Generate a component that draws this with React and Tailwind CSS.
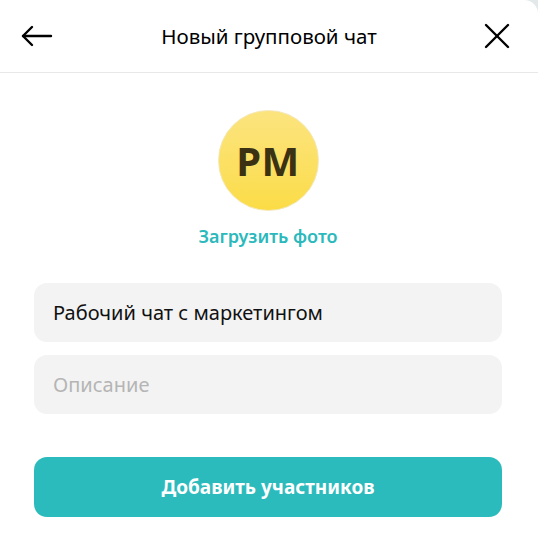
import React, { useState } from 'react';

const App = () => {
  const [name, setName] = useState('Рабочий чат с маркетингом');
  const [description, setDescription] = useState('');

  return (
    <div className="w-[538px] h-[546px] bg-[#e3e8ea]" style={{ fontFamily: '"Noto Sans", "Open Sans", sans-serif' }}>
      <div className="w-full h-full bg-white rounded-tr-[14px] flex flex-col">
        {/* header */}
        <div className="h-[73px] flex items-center justify-between px-[20px] border-b border-[#e8e8e8]">
          <button className="w-[34px] h-[34px] flex items-center justify-center">
            <svg width="34" height="24" viewBox="0 0 34 24" fill="none" stroke="#000" strokeWidth="2.4" strokeLinecap="round" strokeLinejoin="round">
              <path d="M31 12H3" />
              <path d="M12 3L3 12l9 9" />
            </svg>
          </button>
          <h1 className="text-[20.5px] text-black leading-none ml-[4px]">Новый групповой чат</h1>
          <button className="w-[34px] h-[34px] flex items-center justify-center mr-[4px]">
            <svg width="26" height="26" viewBox="0 0 26 26" fill="none" stroke="#000" strokeWidth="2.4" strokeLinecap="round">
              <path d="M2 2l22 22" />
              <path d="M24 2L2 24" />
            </svg>
          </button>
        </div>

        {/* avatar */}
        <div className="flex flex-col items-center pt-[37px] pr-[2px]">
          <div className="w-[101px] h-[101px] rounded-full bg-gradient-to-b from-[#fce47e] to-[#fbdc45] border border-[#f4e8b8] flex items-center justify-center">
            <span className="text-[40px] font-bold text-[#3b3213] tracking-[0.5px]">PM</span>
          </div>
          <button className="mt-[16px] text-[18px] font-semibold text-[#2bb9bb] leading-none">Загрузить фото</button>
        </div>

        {/* form */}
        <div className="w-[468px] ml-[34px] mt-[38px] flex flex-col gap-[13px]">
          <input
            type="text"
            value={name}
            onChange={(e) => setName(e.target.value)}
            className="w-full h-[59px] rounded-[13px] bg-[#f3f3f3] px-[19px] text-[20px] text-[#111] outline-none placeholder:text-[#b5b5b5]"
          />
          <input
            type="text"
            value={description}
            onChange={(e) => setDescription(e.target.value)}
            placeholder="Описание"
            className="w-full h-[59px] rounded-[13px] bg-[#f3f3f3] px-[19px] text-[20px] text-[#111] outline-none placeholder:text-[#b5b5b5]"
          />
          <button className="w-full h-[60px] mt-[30px] rounded-[13px] bg-[#2bbbbc] text-white text-[19px] font-bold">
            Добавить участников
          </button>
        </div>
      </div>
    </div>
  );
};

export default App;
